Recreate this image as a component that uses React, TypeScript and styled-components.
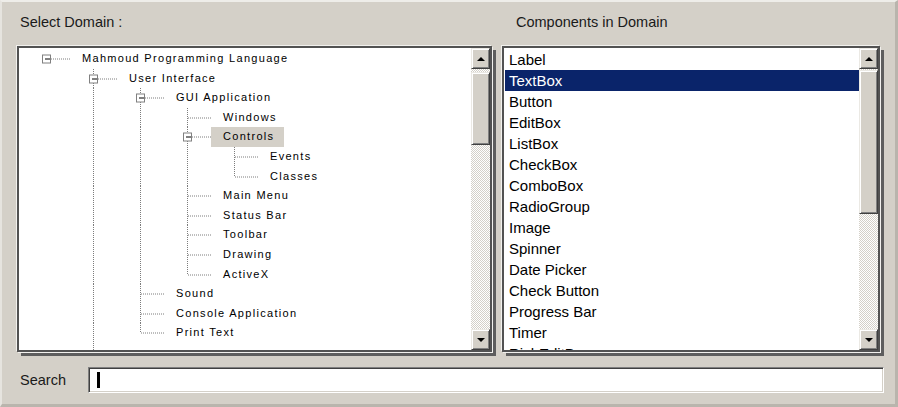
import styled, { createGlobalStyle } from "styled-components";

const GlobalStyle = createGlobalStyle`
    body {
        margin: 0;
        background: #d4d0c8;
        font-family: "Liberation Sans", Arial, sans-serif;
    }
`

const Window = styled.div`
    width: 898px;
    height: 407px;
    box-sizing: border-box;
    background: #d4d0c8;
    border-top: 2px solid #eeede9;
    border-left: 2px solid #e6e4df;
    border-right: 3px solid #b9b5ad;
    border-bottom: 3px solid #b9b5ad;
    padding-left: 15px;
    display: flex;
    flex-direction: column;
    overflow: hidden;
`

const Panels = styled.div`
    display: flex;
    gap: 10px;
`

const Column = styled.div<{ $width: number }>`
    width: ${props => props.$width}px;
    display: flex;
    flex-direction: column;
`

const Caption = styled.div<{ $indent: number }>`
    height: 44px;
    line-height: 40px;
    padding-left: ${props => props.$indent}px;
    font-size: 14.5px;
    color: #1a1a1a;
`

const Frame = styled.div`
    height: 306px;
    box-sizing: border-box;
    border: 2px solid #525252;
    background: #fff;
    display: flex;
    box-shadow: -1px -1px 0 #f2f1ee, 1px 1px 0 #f2f1ee, 4px 4px 0 #5e5e5e;
`

const TreeBody = styled.div`
    flex: 1;
    overflow: hidden;
    padding-top: 1px;
`

const TreeRow = styled.div`
    height: 19.6px;
    display: flex;
    align-items: stretch;
`

const TreeLabel = styled.span<{ $selected?: boolean }>`
    padding: 0 10px 0 12px;
    line-height: 19.6px;
    font-size: 11px;
    letter-spacing: 1.3px;
    white-space: nowrap;
    color: #000;
    background: ${props => props.$selected ? "#d4d0c8" : "transparent"};
`

const ListBody = styled.div`
    flex: 1;
    overflow: hidden;
    padding: 1px 0 0 1px;
`

const ListItem = styled.div<{ $selected?: boolean }>`
    height: 21px;
    line-height: 21px;
    padding-left: 4px;
    font-size: 15px;
    white-space: nowrap;
    color: ${props => props.$selected ? "#fff" : "#000"};
    background: ${props => props.$selected ? "#0a246a" : "transparent"};
`

const ScrollBar = styled.div`
    width: 19px;
    display: flex;
    flex-direction: column;
    background: repeating-conic-gradient(#d4d0c8 0 25%, #fff 0 50%) 0 0 / 2px 2px;
`

const ScrollButton = styled.div`
    height: 21px;
    box-sizing: border-box;
    background: #d4d0c8;
    border-top: 1px solid #ebe9e4;
    border-left: 1px solid #ebe9e4;
    border-right: 1px solid #404040;
    border-bottom: 1px solid #404040;
    box-shadow: inset 1px 1px 0 #fff, inset -1px -1px 0 #808080;
    display: flex;
    align-items: center;
    justify-content: center;
`

const Thumb = styled(ScrollButton)<{ $top: number; $size: number }>`
    margin-top: ${props => props.$top}px;
    height: ${props => props.$size}px;
`

const Track = styled.div`
    flex: 1;
`

const Arrow = styled.span<{ $down?: boolean }>`
    width: 0;
    height: 0;
    border-left: 4px solid transparent;
    border-right: 4px solid transparent;
    border-${props => props.$down ? "top" : "bottom"}: 4px solid #000;
`

const SearchRow = styled.div`
    margin-top: 15px;
    display: flex;
    align-items: center;
`

const SearchLabel = styled.div`
    width: 68px;
    padding-left: 3px;
    font-size: 14.5px;
    color: #1a1a1a;
`

const SearchInput = styled.div`
    width: 796px;
    height: 26px;
    box-sizing: border-box;
    background: #fff;
    border-top: 1px solid #808080;
    border-left: 1px solid #808080;
    border-right: 1px solid #fff;
    border-bottom: 1px solid #fff;
    box-shadow: inset 1px 1px 0 #404040, inset -1px -1px 0 #d4d0c8;
    display: flex;
    align-items: center;
    padding-left: 8px;
`

const Caret = styled.span`
    width: 3px;
    height: 16px;
    background: #000;
`

type Line = "full" | "half"

type TreeNode = {
    label: string
    level: number
    box?: boolean
    selected?: boolean
    lines: Record<number, Line>
}

const TREE: TreeNode[] = [
    { label: "Mahmoud Programming Language", level: 0, box: true, lines: {} },
    { label: "User Interface", level: 1, box: true, lines: { 1: "full" } },
    { label: "GUI Application", level: 2, box: true, lines: { 1: "full", 2: "full" } },
    { label: "Windows", level: 3, lines: { 1: "full", 2: "full", 3: "full" } },
    { label: "Controls", level: 3, box: true, selected: true, lines: { 1: "full", 2: "full", 3: "full" } },
    { label: "Events", level: 4, lines: { 1: "full", 2: "full", 3: "full", 4: "full" } },
    { label: "Classes", level: 4, lines: { 1: "full", 2: "full", 3: "full", 4: "half" } },
    { label: "Main Menu", level: 3, lines: { 1: "full", 2: "full", 3: "full" } },
    { label: "Status Bar", level: 3, lines: { 1: "full", 2: "full", 3: "full" } },
    { label: "Toolbar", level: 3, lines: { 1: "full", 2: "full", 3: "full" } },
    { label: "Drawing", level: 3, lines: { 1: "full", 2: "full", 3: "full" } },
    { label: "ActiveX", level: 3, lines: { 1: "full", 2: "full", 3: "half" } },
    { label: "Sound", level: 2, lines: { 1: "full", 2: "full" } },
    { label: "Console Application", level: 2, lines: { 1: "full", 2: "full" } },
    { label: "Print Text", level: 2, lines: { 1: "full", 2: "half" } },
]

const COMPONENTS = [
    "Label", "TextBox", "Button", "EditBox", "ListBox", "CheckBox", "ComboBox",
    "RadioGroup", "Image", "Spinner", "Date Picker", "Check Button", "Progress Bar",
    "Timer", "RichEditBox",
]

const ROW_H = 19.6
const STEP = 47
const colX = (level: number) => 27 + STEP * level

const Connectors = ({ node }: { node: TreeNode }) => {
    const width = 51 + STEP * node.level
    const cx = colX(node.level)
    const mid = 9.5
    return (
        <svg width={width} height={ROW_H} style={{ flexShrink: 0, display: "block" }}>
            <g stroke="#7c7c7c" strokeWidth="1" strokeDasharray="1 1" fill="none">
                {Object.entries(node.lines).map(([col, kind]) => {
                    const x = colX(Number(col)) + 0.5
                    return <line key={col} x1={x} y1={0} x2={x} y2={kind === "full" ? ROW_H : mid} />
                })}
                <line x1={node.box ? cx + 5 : cx + 1} y1={mid + 0.5} x2={width} y2={mid + 0.5} />
            </g>
            {node.box && (
                <g>
                    <rect x={cx - 3.5} y={mid - 3.5} width={8} height={8} fill="#fff" stroke="#808080" />
                    <line x1={cx - 1} y1={mid + 0.5} x2={cx + 4} y2={mid + 0.5} stroke="#000" />
                </g>
            )}
        </svg>
    )
}

const Scroller = ({ thumbTop, thumbSize }: { thumbTop: number; thumbSize: number }) => (
    <ScrollBar>
        <ScrollButton><Arrow /></ScrollButton>
        <Thumb $top={thumbTop} $size={thumbSize} />
        <Track />
        <ScrollButton><Arrow $down /></ScrollButton>
    </ScrollBar>
)

export default function App() {
    return (
        <>
            <GlobalStyle />
            <Window>
                <Panels>
                    <Column $width={475}>
                        <Caption $indent={3}>Select Domain :</Caption>
                        <Frame>
                            <TreeBody>
                                {TREE.map((node) => (
                                    <TreeRow key={node.label}>
                                        <Connectors node={node} />
                                        <TreeLabel $selected={node.selected}>{node.label}</TreeLabel>
                                    </TreeRow>
                                ))}
                                <TreeRow>
                                    <svg width={100} height={ROW_H} style={{ display: "block" }}>
                                        <line x1={colX(1) + 0.5} y1={0} x2={colX(1) + 0.5} y2={ROW_H} stroke="#7c7c7c" strokeDasharray="1 1" />
                                    </svg>
                                </TreeRow>
                            </TreeBody>
                            <Scroller thumbTop={3} thumbSize={73} />
                        </Frame>
                    </Column>
                    <Column $width={378}>
                        <Caption $indent={14}>Components in Domain</Caption>
                        <Frame>
                            <ListBody>
                                {COMPONENTS.map((name) => (
                                    <ListItem key={name} $selected={name === "TextBox"}>{name}</ListItem>
                                ))}
                            </ListBody>
                            <Scroller thumbTop={1} thumbSize={144} />
                        </Frame>
                    </Column>
                </Panels>
                <SearchRow>
                    <SearchLabel>Search</SearchLabel>
                    <SearchInput><Caret /></SearchInput>
                </SearchRow>
            </Window>
        </>
    )
}
